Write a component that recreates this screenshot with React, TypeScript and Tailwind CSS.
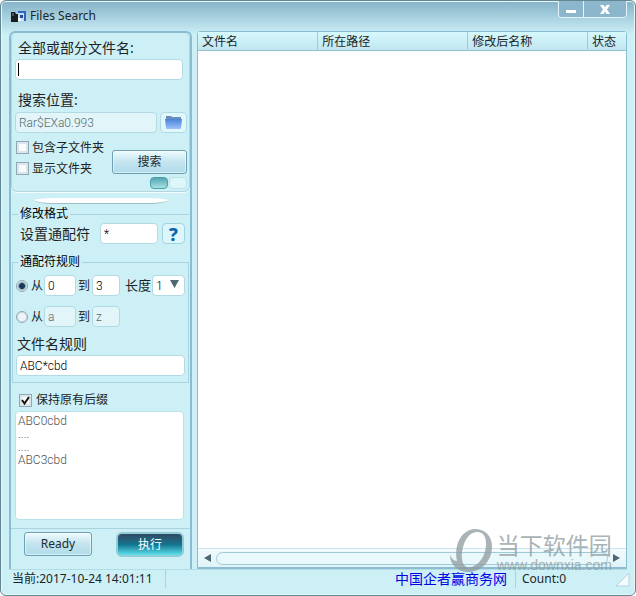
import { useState } from "react";

const field =
  "h-[21px] min-w-0 rounded-sm border border-[#b2dae4] bg-white px-[3px] font-['Roboto','Noto_Sans_CJK_SC',sans-serif] text-xs font-light text-black outline-none disabled:bg-[#e2f5f9] disabled:text-[#5c6a6f]";

const glassButton =
  "rounded-[3px] border border-[#6d9fb5] bg-linear-to-b from-[#eefbff] via-[#c4e4ee] to-[#b0dcea] text-xs text-[#1b2b33] shadow-[inset_0_0_0_1px_#ffffff80]";

const checkbox =
  "relative size-[13px] shrink-0 appearance-none border border-[#8ea9b5] bg-[#f8fcfd] shadow-[inset_0_0_0_2px_#dbe5ea]";

const columns = [
  { label: "文件名", width: "w-[28%]" },
  { label: "所在路径", width: "w-[35%]" },
  { label: "修改后名称", width: "w-[28%]" },
  { label: "状态", width: "w-[9%]" },
];

function AppIcon() {
  return (
    <svg width="15" height="11" viewBox="0 0 15 11" aria-hidden="true">
      <path d="M0 1h4l1 2h2v8H0z" fill="#1b1d25" />
      <path d="M1 2h2v3H1z" fill="#4a5468" />
      <rect x="7" width="8" height="10" fill="#2f66bd" />
      <rect x="7" y="2" width="6" height="8" fill="#c5dcf3" />
      <rect x="9" y="4" width="3" height="3" fill="#26498c" />
      <path d="M7 7h3v3H7z" fill="#f5f9fc" />
    </svg>
  );
}

function FolderIcon() {
  return (
    <svg width="17" height="13" viewBox="0 0 17 13" aria-hidden="true">
      <defs>
        <linearGradient id="folder" x1="0" y1="0" x2="0" y2="1">
          <stop offset="0" stopColor="#4b83d8" />
          <stop offset="1" stopColor="#9cc4fa" />
        </linearGradient>
      </defs>
      <path d="M1 0h5l1 1h9v5H1z" fill="#6b8dbb" />
      <path d="M0 3h17l-1 9q0 1-1 1H2q-1 0-1-1z" fill="url(#folder)" />
    </svg>
  );
}

function Watermark() {
  return (
    <div className="pointer-events-none absolute right-[23px] bottom-[22px] flex items-center gap-[4px] text-[#8e9a9e] opacity-75">
      <svg className="shrink-0" width="43" height="45" viewBox="0 0 43 45" aria-hidden="true">
        <path
          fillRule="evenodd"
          fill="currentColor"
          d="M24 1C35 0 43 9 42 20C41 34 31 44 18 44C8 44 0 37 0 27C2 31 4 33 7 33C4 18 10 3 24 1ZM27 4C17 4 11 19 12 31C13 38 17 41 22 39C30 36 36 27 36 16C36 8 33 4 27 4Z"
        />
      </svg>
      <div className="flex flex-col">
        <span className="font-['Noto_Sans_CJK_SC',sans-serif] text-[23px] leading-[28px]">
          当下软件园
        </span>
        <span className="font-['Liberation_Sans',sans-serif] text-[14px] leading-[14px]">
          www.downxia.com
        </span>
      </div>
    </div>
  );
}

export default function App() {
  const [name, setName] = useState("");
  const [wildcard, setWildcard] = useState("*");
  const [mode, setMode] = useState("number");
  const [rule, setRule] = useState("ABC*cbd");

  return (
    <div className="relative flex min-h-screen flex-col rounded-md border border-[#638792] bg-[#cdf0f6] bg-linear-to-b from-[#86b3c9] to-[#cdf0f6] to-[34px] px-2 font-['Noto_Sans','Noto_Sans_CJK_SC',sans-serif] text-xs text-[#1c2427] shadow-[inset_0_0_0_1px_#e6f8fb]">
      <header className="flex h-[30px] items-start justify-between">
        <h1 className="flex items-center gap-1 pt-[6px] pl-[2px] text-xs leading-[18px]">
          <AppIcon />
          Files Search
        </h1>
        <div className="flex overflow-hidden rounded-b border border-t-0 border-[#e3f5fa]">
          <button
            type="button"
            aria-label="Minimize"
            className="flex h-4 w-[25px] items-end justify-center border-r border-[#e3f5fa] bg-[#8bb6cb] pb-1"
          >
            <span className="h-[3px] w-[10px] bg-white" />
          </button>
          <button
            type="button"
            aria-label="Close"
            className="flex h-4 w-[42px] items-center justify-center bg-[#8bb6cb]"
          >
            <svg width="10" height="9" viewBox="0 0 10 9" aria-hidden="true">
              <path d="M0 0h3.600L5 2.400 6.400 0H10L7 4.500 10 9H6.400L5 6.600 3.600 9H0l3-4.500z" fill="#fff" />
            </svg>
          </button>
        </div>
      </header>

      <main className="flex flex-1 gap-[5px]">
        <aside className="flex w-[183px] shrink-0 flex-col rounded-t-md border-2 border-b-0 border-[#8abdd1]">
          <form
            className="flex h-[159px] flex-col rounded-md border border-t-0 border-[#b5d5de] pt-1 pr-[2px] pl-[3px] shadow-[0_1px_0_#f3fcfd]"
            onSubmit={(e) => e.preventDefault()}
          >
            <label htmlFor="name" className="pl-[3px] text-sm leading-[22px]">
              全部或部分文件名:
            </label>
            <div className="relative mr-1 flex">
              <input
                id="name"
                value={name}
                onChange={(e) => setName(e.target.value)}
                className={`${field} w-full`}
              />
              {name === "" && (
                <span className="pointer-events-none absolute top-1 left-[3px] h-[13px] w-px bg-black" />
              )}
            </div>
            <label htmlFor="location" className="mt-[10px] pl-[3px] text-sm leading-[20px]">
              搜索位置:
            </label>
            <div className="mt-[2px] flex shrink-0 gap-[3px]">
              <input id="location" disabled value="Rar$EXa0.993" className={`${field} flex-1`} />
              <button
                type="button"
                aria-label="Browse"
                className="flex h-[21px] w-[27px] items-center justify-center rounded-sm border border-[#b2dae4] bg-[#e0f7fb]"
              >
                <FolderIcon />
              </button>
            </div>
            <div className="mt-[4px] flex justify-between">
              <div className="flex flex-col">
                <label className="flex h-[21px] items-center gap-[3px] pl-px">
                  <input type="checkbox" className={checkbox} />
                  包含子文件夹
                </label>
                <label className="flex h-[21px] items-center gap-[3px] pl-px">
                  <input type="checkbox" className={checkbox} />
                  显示文件夹
                </label>
              </div>
              <div className="flex flex-col items-end pt-[13px]">
                <button type="submit" className={`${glassButton} h-6 w-[75px]`}>
                  搜索
                </button>
                <div className="mt-[3px] flex gap-px">
                  <span className="h-3 w-[18px] rounded-sm border border-[#4b9fac] bg-linear-to-b from-[#54a6b0] to-[#a5e1e5]" />
                  <span className="h-3 w-[18px] rounded-sm border border-[#b9e3ec] bg-[#dcf6fa]" />
                </div>
              </div>
            </div>
          </form>

          <svg
            className="mx-auto mt-[5px] h-2 w-[138px] shrink-0"
            viewBox="0 0 138 8"
            preserveAspectRatio="none"
            aria-hidden="true"
          >
            <path d="M0 3h138q-8 4-20 4H20Q8 7 0 3z" fill="#9fbfc8" />
            <path d="M0 3q10-2 22-2h94q12 0 22 2-8 3-20 3H20Q8 6 0 3z" fill="#fff" />
          </svg>

          <fieldset className="mx-px h-12 border-t border-[#a8d3df] px-[3px]">
            <legend className="ml-[3px] px-[2px] leading-[18px] text-black">修改格式</legend>
            <div className="flex items-center">
              <label htmlFor="wildcard" className="ml-[5px] w-[80px] text-sm leading-[21px]">
                设置通配符
              </label>
              <input
                id="wildcard"
                value={wildcard}
                onChange={(e) => setWildcard(e.target.value)}
                className={`${field} w-[58px]`}
              />
              <button
                type="button"
                aria-label="Help"
                className="ml-1 flex h-[21px] w-[23px] items-center justify-center rounded-sm border border-[#9fd5e3] bg-[#dcf6fa] text-lg font-extrabold text-[#0c63ae]"
              >
                ?
              </button>
            </div>
          </fieldset>

          <fieldset className="mx-px border border-[#a8d3df] px-[3px] pb-[6px]">
            <legend className="ml-[2px] px-[2px] leading-[18px] text-black">通配符规则</legend>
            <div className="mt-[4px] flex items-center">
              <Radio label="从" checked={mode === "number"} onSelect={() => setMode("number")} />
              <input aria-label="从" defaultValue="0" className={`${field} w-8`} />
              <span className="mx-[2px]">到</span>
              <input aria-label="到" defaultValue="3" className={`${field} w-7`} />
              <label htmlFor="length" className="ml-[5px] text-[13px]">
                长度
              </label>
              <div className="relative ml-px flex flex-1">
                <select id="length" className={`${field} w-full appearance-none`}>
                  <option>1</option>
                  <option>2</option>
                  <option>3</option>
                </select>
                <svg
                  className="pointer-events-none absolute top-[5px] right-[6px]"
                  width="9"
                  height="8"
                  viewBox="0 0 9 8"
                  aria-hidden="true"
                >
                  <path d="M0 0h9L4.500 8z" fill="#4d6872" />
                </svg>
              </div>
            </div>
            <div className="mt-[10px] flex items-center">
              <Radio label="从" checked={mode === "letter"} onSelect={() => setMode("letter")} />
              <input aria-label="从" disabled defaultValue="a" className={`${field} w-8`} />
              <span className="mx-[2px]">到</span>
              <input aria-label="到" disabled defaultValue="z" className={`${field} w-7`} />
            </div>
            <label htmlFor="rule" className="mt-[6px] block pl-px text-sm leading-[22px]">
              文件名规则
            </label>
            <input
              id="rule"
              value={rule}
              onChange={(e) => setRule(e.target.value)}
              className={`${field} w-full`}
            />
          </fieldset>

          <div className="flex flex-1 flex-col pt-[6px] pr-[6px] pb-2 pl-1">
            <label className="flex h-[22px] items-center gap-1 pl-1">
              <span className="relative flex">
                <input type="checkbox" defaultChecked className={checkbox} />
                <svg
                  className="pointer-events-none absolute top-[2px] left-[2px]"
                  width="9"
                  height="9"
                  viewBox="0 0 9 9"
                  aria-hidden="true"
                >
                  <path d="M1 4l2.500 3.500L8 1" fill="none" stroke="#111" strokeWidth="2" />
                </svg>
              </span>
              保持原有后缀
            </label>
            <textarea
              aria-label="Preview"
              readOnly
              value={"ABC0cbd\n....\n....\nABC3cbd"}
              className="min-h-[100px] flex-1 resize-none rounded-sm border border-[#b9e3ec] bg-white px-[2px] py-[3px] font-['Roboto',sans-serif] text-xs leading-[13px] font-light text-[#505050] outline-none"
            />
          </div>

          <div className="flex h-[41px] items-start justify-between border-t border-[#a8d3df] px-[6px] pt-[3px]">
            <button type="button" className={`${glassButton} ml-[7px] h-6 w-[68px]`}>
              Ready
            </button>
            <button
              type="button"
              className="h-[25px] w-[68px] rounded-md border-2 border-[#93cbd8] bg-linear-to-b from-[#2d4a63] via-[#107590] to-[#5de3ee] text-xs text-white"
            >
              执行
            </button>
          </div>
        </aside>

        <section className="flex min-w-0 flex-1 flex-col rounded-t border border-b-2 border-[#8abdd1] bg-white">
          <table className="w-full table-fixed border-collapse">
            <thead>
              <tr className="border-b border-[#8fc3d3] bg-linear-to-b from-[#d6f9fd] to-[#c1e6ef]">
                {columns.map((column) => (
                  <th
                    key={column.label}
                    className={`${column.width} border-r border-[#9fcbd9] pt-px pl-[4px] text-left leading-[17px] font-normal whitespace-nowrap last:border-r-0`}
                  >
                    {column.label}
                  </th>
                ))}
              </tr>
            </thead>
            <tbody />
          </table>
          <div className="mt-auto flex h-[19px] items-center gap-[5px] border-t border-[#cde5f0] bg-linear-to-b from-[#f3fbfd] to-[#dff4f8] px-[6px]">
            <svg width="7" height="8" viewBox="0 0 7 8" aria-hidden="true">
              <path d="M7 0v8L0 4z" fill="#4d6872" />
            </svg>
            <div className="h-[13px] flex-1 rounded-full border border-[#9fcbd9] bg-[#e8f8fb]" />
            <svg width="7" height="8" viewBox="0 0 7 8" aria-hidden="true">
              <path d="M0 0v8l7-4z" fill="#4d6872" />
            </svg>
          </div>
        </section>
      </main>

      <footer className="flex h-[26px] items-start justify-between border-t border-[#b5dde8] pl-[3px] leading-[18px]">
        <span className="border-r border-[#a8d3df] pr-3">当前:2017-10-24 14:01:11</span>
        <div className="flex">
          <a href="#" className="pr-2 text-sm leading-[18px] text-[#0000e6]">
            中国企者赢商务网
          </a>
          <span className="w-[100px] border-l border-[#a8d3df] pl-[6px]">Count:0</span>
          <svg className="mt-[2px] -mr-1" width="16" height="15" viewBox="0 0 16 15" aria-hidden="true">
            <path d="M14 1v13H1z" fill="#f4fbfd" stroke="#b3d3dc" />
          </svg>
        </div>
      </footer>

      <Watermark />
    </div>
  );
}

interface RadioProps {
  label: string;
  checked: boolean;
  onSelect: () => void;
}

function Radio({ label, checked, onSelect }: RadioProps) {
  return (
    <label className="flex items-center gap-[3px] pr-px">
      <input
        type="radio"
        name="mode"
        checked={checked}
        onChange={onSelect}
        className="size-3 appearance-none rounded-full border border-[#8ea9b5] bg-[#eef5f8] shadow-[inset_0_0_0_1px_#c9d7dd] checked:bg-radial checked:from-[#173d5c] checked:from-35% checked:to-[#e4eef2] checked:to-60%"
      />
      {label}
    </label>
  );
}
